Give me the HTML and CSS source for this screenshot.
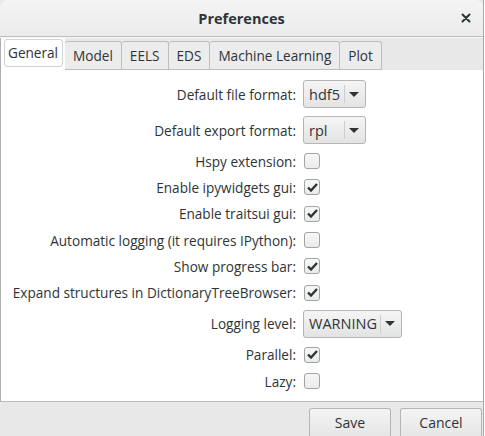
FILE: index.html
```html
<!DOCTYPE html>
<html>
<head>
<meta charset="utf-8">
<link rel="stylesheet" href="styles.css">
</head>
<body>
<div class="window">
  <div class="titlebar">
    <span class="title">Preferences</span>
    <span class="close">
      <svg width="10" height="10" viewBox="0 0 10 10"><path d="M1.5 1.5 L8.5 8.5 M8.5 1.5 L1.5 8.5" stroke="#2e3436" stroke-width="2" stroke-linecap="round"/></svg>
    </span>
  </div>
  <div class="tabbar">
    <div class="tab active"><span class="inner">General</span></div>
    <div class="tab">Model</div>
    <div class="tab">EELS</div>
    <div class="tab">EDS</div>
    <div class="tab">Machine Learning</div>
    <div class="tab">Plot</div>
  </div>
  <div class="panel">
    <div class="row tall"><span class="label">Default file format:</span><div class="combo"><span class="val">hdf5</span><span class="sep"></span><span class="arrow"></span></div></div>
    <div class="row tall"><span class="label">Default export format:</span><div class="combo"><span class="val">rpl</span><span class="sep"></span><span class="arrow"></span></div></div>
    <div class="row"><span class="label">Hspy extension:</span><span class="check"></span></div>
    <div class="row"><span class="label">Enable ipywidgets gui:</span><span class="check on"><svg width="11" height="9" viewBox="0 0 11 9"><path d="M1 4.5 L4 7.5 L10 1" fill="none" stroke="#2e3436" stroke-width="2.4"/></svg></span></div>
    <div class="row"><span class="label">Enable traitsui gui:</span><span class="check on"><svg width="11" height="9" viewBox="0 0 11 9"><path d="M1 4.5 L4 7.5 L10 1" fill="none" stroke="#2e3436" stroke-width="2.4"/></svg></span></div>
    <div class="row"><span class="label">Automatic logging (it requires IPython):</span><span class="check"></span></div>
    <div class="row"><span class="label">Show progress bar:</span><span class="check on"><svg width="11" height="9" viewBox="0 0 11 9"><path d="M1 4.5 L4 7.5 L10 1" fill="none" stroke="#2e3436" stroke-width="2.4"/></svg></span></div>
    <div class="row"><span class="label">Expand structures in DictionaryTreeBrowser:</span><span class="check on"><svg width="11" height="9" viewBox="0 0 11 9"><path d="M1 4.5 L4 7.5 L10 1" fill="none" stroke="#2e3436" stroke-width="2.4"/></svg></span></div>
    <div class="row tall"><span class="label">Logging level:</span><div class="combo"><span class="val wide">WARNING</span><span class="sep"></span><span class="arrow"></span></div></div>
    <div class="row"><span class="label">Parallel:</span><span class="check on"><svg width="11" height="9" viewBox="0 0 11 9"><path d="M1 4.5 L4 7.5 L10 1" fill="none" stroke="#2e3436" stroke-width="2.4"/></svg></span></div>
    <div class="row"><span class="label">Lazy:</span><span class="check"></span></div>
  </div>
  <div class="footer">
    <div class="btn save">Save</div>
    <div class="btn cancel">Cancel</div>
  </div>
</div>
</body>
</html>
```

FILE: styles.css
```css
html, body {
  margin: 0;
  padding: 0;
  background: #ffffff;
}
body {
  font-family: "Open Sans", "Noto Sans", sans-serif;
  font-size: 13.6px;
  color: #2e3436;
}
.window {
  width: 484px;
  height: 436px;
  display: flex;
  flex-direction: column;
  background: #e8e8e8;
  border-right: 1px solid #a8a8a8;
  box-sizing: border-box;
}
.titlebar {
  height: 36px;
  flex: none;
  display: flex;
  align-items: center;
  justify-content: center;
  position: relative;
  background: linear-gradient(#f4f4f4, #ebebeb);
  border-bottom: 1px solid #bfbfbf;
  border-radius: 7px 7px 0 0;
}
.title {
  font-weight: bold;
  font-size: 14.5px;
  color: #2e3436;
}
.close {
  position: absolute;
  right: 12px;
  top: 13px;
  width: 10px;
  height: 10px;
  display: flex;
}
.tabbar {
  height: 33px;
  flex: none;
  display: flex;
  align-items: flex-end;
  background: #e8e8e8;
  border-top: 1px solid #f6f6f6;
  box-sizing: border-box;
  position: relative;
  z-index: 1;
  margin-bottom: -1px;
}
.tab {
  height: 29px;
  box-sizing: border-box;
  padding: 0 8px 1px 8px;
  display: flex;
  align-items: center;
  background: #ececec;
  border: 1px solid #bcbcbc;
  border-left: none;
  border-radius: 3px 3px 0 0;
  font-size: 13.6px;
}
.tab.active {
  height: 32px;
  padding: 1px 2px 3px 3px;
  background: #ffffff;
  border: none;
  border-left: 1px solid #b0b0b0;
  border-radius: 0;
  align-items: stretch;
}
.tab.active .inner {
  display: flex;
  align-items: center;
  padding: 0 4px 1px 3px;
  border: 1px solid #d2d2d2;
  border-radius: 3px;
  background: #ffffff;
}
.panel {
  flex: none;
  height: 333px;
  box-sizing: border-box;
  background: #ffffff;
  border-top: 1px solid #bcbcbc;
  border-bottom: 1px solid #bcbcbc;
  border-left: 1px solid #b0b0b0;
  padding-top: 6px;
  display: flex;
  flex-direction: column;
}
.row {
  height: 26.3px;
  display: flex;
  align-items: center;
  flex: none;
}
.row.tall { height: 36px; }
.label {
  width: 295px;
  text-align: right;
  white-space: nowrap;
  margin-right: 7px;
  flex: none;
}
.combo {
  height: 28px;
  box-sizing: border-box;
  border: 1px solid #b5b5b5;
  border-radius: 3px;
  background: linear-gradient(#f5f5f5, #e3e3e3);
  display: flex;
  align-items: center;
  padding: 0 6px 0 5px;
  font-size: 14.5px;
}
.val {
  white-space: nowrap;
  width: 32px;
}
.val.wide { width: auto; }
.sep {
  width: 1px;
  height: 18px;
  background: #cdcdcd;
  margin: 0 4px 0 3px;
}
.arrow {
  width: 0;
  height: 0;
  border-left: 5px solid transparent;
  border-right: 5px solid transparent;
  border-top: 5px solid #2e3436;
}
.check {
  width: 16px;
  height: 16px;
  box-sizing: border-box;
  border: 1px solid #a3a3a3;
  border-radius: 3px;
  background: linear-gradient(#f7f7f7, #ebebeb);
  display: flex;
  align-items: center;
  justify-content: center;
  margin-left: 1px;
}
.footer {
  flex: 1;
  display: flex;
  justify-content: flex-end;
  align-items: flex-end;
  gap: 9px;
  padding-right: 1px;
  background: #e8e8e8;
}
.btn {
  height: 28px;
  box-sizing: border-box;
  border: 1px solid #b5b5b5;
  border-bottom: none;
  border-radius: 3px 3px 0 0;
  background: linear-gradient(#f4f4f4, #e6e6e6);
  display: flex;
  align-items: center;
  justify-content: center;
  font-size: 14px;
}
.save { width: 82px; }
.cancel { width: 82px; }
```
